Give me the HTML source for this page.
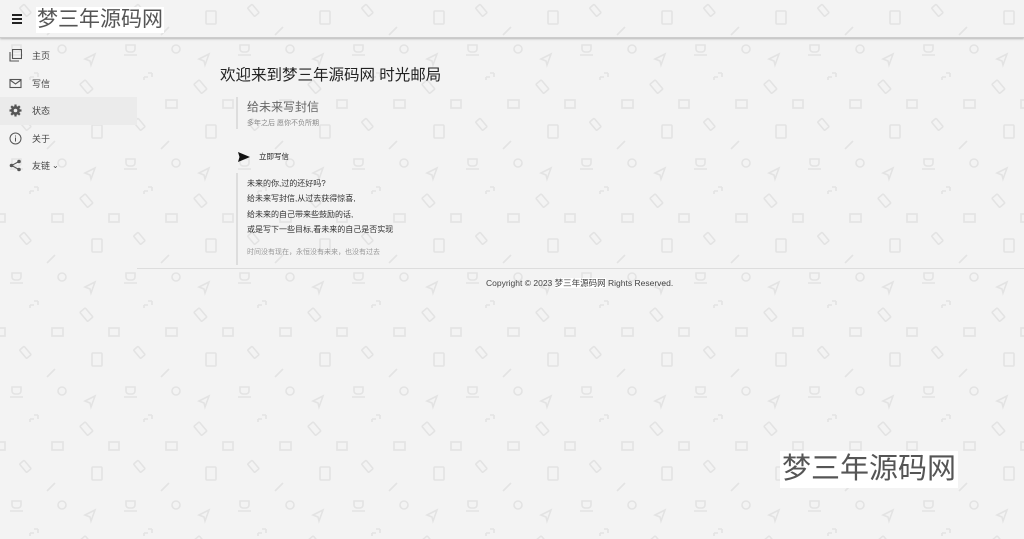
<!DOCTYPE html>
<html><head><meta charset="utf-8">
<style>
*{margin:0;padding:0;box-sizing:border-box}
body{width:1024px;height:539px;overflow:hidden;background:#f3f3f3;font-family:"Liberation Sans","Noto Sans CJK SC",sans-serif;color:#333;position:relative}
#bg{position:absolute;left:0;top:0;width:1024px;height:539px}
.header{position:absolute;left:0;top:0;width:1024px;height:38px;border-bottom:1px solid #ccc;box-shadow:0 1px 2px rgba(0,0,0,.25)}
.burger{position:absolute;left:12px;top:14px;width:10px}
.burger i{display:block;height:1.5px;background:#222;margin-bottom:2.5px}
.logo{position:absolute;left:36px;top:7px;background:#fff;color:#555;font-size:21px;line-height:26px;padding:0 1px}
.side{position:absolute;left:0;top:42px;width:137px}
.item{height:27.5px;display:flex;align-items:center;font-size:9px;color:#444}
.item.act{background:#ebebeb}
.item svg{margin-left:9px;margin-right:10px}
.main{position:absolute;left:220px;top:66px}
h1{font-size:15.5px;font-weight:normal;color:#222;line-height:20px}
.quote{border-left:2px solid #ddd;margin-left:16px;padding-left:9px}
.q1{margin-top:11px;height:32px;padding-top:2px}
.q1 .t{font-size:12px;color:#666;line-height:16px}
.q1 .s{font-size:7px;color:#888;margin-top:3px}
.btn{margin:22px 0 0 18px;display:flex;align-items:center;font-size:7.5px;color:#222}
.q2{margin-top:11px;font-size:8px;line-height:15.3px;color:#333;padding-top:3px;padding-bottom:5px}
.q2 .f{color:#999;font-size:7px;margin-top:8px}
.hr{position:absolute;left:137px;top:268px;width:887px;border-top:1px solid #ddd}
.foot{position:absolute;left:486px;top:277px;font-size:8.5px;color:#444}
.foot span{background:#fff}
.wm{position:absolute;left:780px;top:451px;background:#fff;color:#555;font-size:29px;line-height:37px;padding:0 2px}
</style></head><body>
<svg id="bg" xmlns="http://www.w3.org/2000/svg">
<defs><pattern id="p" width="114" height="114" patternUnits="userSpaceOnUse" x="0" y="-15">
<g fill="none" stroke="#e3e3e3" stroke-width="1.6">
<rect x="52" y="1" width="11" height="8"/><rect x="109" y="1" width="11" height="8"/><rect x="-6" y="1" width="11" height="8"/>
<rect x="92" y="26" width="10" height="13" rx="1"/>
<rect x="22" y="20" width="6" height="11" rx="1" transform="rotate(-40 25 25)"/>
<path d="M47 50l8-8"/>
<circle cx="62" cy="64" r="4"/>
<path d="M12 60h9v4a3 3 0 0 1-3 3h-3a3 3 0 0 1-3-3z M10 70h13"/>
<path d="M85 74l10-5-4 11-1-4z"/>
<path d="M30 92h4M30 92v3 M38 88h-4M38 88v4"/>
<rect x="83" y="96" width="7" height="12" rx="1" transform="rotate(-40 86 102)"/>
</g></pattern></defs>
<rect width="1024" height="539" fill="url(#p)"/>
</svg>
<div class="header"><div class="burger"><i></i><i></i><i></i></div><div class="logo">梦三年源码网</div></div>
<div class="side">
<div class="item"><svg width="13" height="13" viewBox="0 0 13 13" fill="none" stroke="#555" stroke-width="1.1"><rect x="3.5" y="0.5" width="9" height="9"/><path d="M1 3v9h9"/></svg>主页</div>
<div class="item"><svg width="13" height="13" viewBox="0 0 13 13" fill="none" stroke="#555" stroke-width="1.1"><rect x="1" y="2.5" width="11" height="8"/><path d="M1 3l5.5 4 5.5-4"/></svg>写信</div>
<div class="item act"><svg width="13" height="13" viewBox="0 0 13 13"><circle cx="6.5" cy="6.5" r="4.5" fill="#555"/><g stroke="#555" stroke-width="2.2"><path d="M6.5 0.5v12M0.5 6.5h12M2.2 2.2l8.6 8.6M10.8 2.2l-8.6 8.6"/></g><circle cx="6.5" cy="6.5" r="1.8" fill="#ebebeb"/></svg>状态</div>
<div class="item"><svg width="13" height="13" viewBox="0 0 13 13" fill="none" stroke="#555" stroke-width="1"><circle cx="6.5" cy="6.5" r="5.5"/><path d="M6.5 5.5v4M6.5 3.5v1"/></svg>关于</div>
<div class="item"><svg width="13" height="13" viewBox="0 0 13 13" fill="#555"><circle cx="10" cy="2.5" r="1.8"/><circle cx="2.5" cy="6.5" r="1.8"/><circle cx="10" cy="10.5" r="1.8"/><path d="M10 2.5L2.5 6.5 10 10.5" stroke="#555" fill="none"/></svg>友链 <span style="font-size:8px;margin-left:2px">⌄</span></div>
</div>
<div class="main">
<h1>欢迎来到梦三年源码网 时光邮局</h1>
<div class="quote q1"><div class="t">给未来写封信</div><div class="s">多年之后 愿你不负所期</div></div>
<div class="btn"><svg width="12" height="10" viewBox="0 0 12 10" style="margin-right:9px"><path d="M0 0l12 5-12 5 1.5-5z" fill="#111"/></svg>立即写信</div>
<div class="quote q2">未来的你,过的还好吗?<br>给未来写封信,从过去获得惊喜,<br>给未来的自己带来些鼓励的话,<br>或是写下一些目标,看未来的自己是否实现<div class="f">时间没有现在，永恒没有未来，也没有过去</div></div>
</div>
<div class="hr"></div>
<div class="foot">Copyright © 2023 <span>梦三年源码网</span> Rights Reserved.</div>
<div class="wm">梦三年源码网</div>
</body></html>
